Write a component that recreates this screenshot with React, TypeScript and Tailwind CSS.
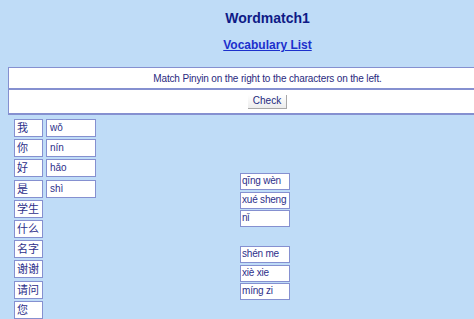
import React from 'react';

const chars = ['我', '你', '好', '是', '学生', '什么', '名字', '谢谢', '请问', '您'];
const matched = ['wǒ', 'nín', 'hǎo', 'shì'];
const pool = [['qīng wèn', 'xué sheng', 'nǐ'], ['shén me', 'xiè xie', 'míng zi']];

export default function App() {
  return (
    <div className="w-[474px] h-[319px] overflow-hidden bg-[#bfdcf7] font-['Liberation_Sans','Noto_Sans_CJK_SC',sans-serif]">
      <div className="w-[535px] px-2 pt-2">
        {/* Heading */}
        <div className="h-[20px] text-center text-[14px] leading-[20px] font-bold text-[#0e1a86]">Wordmatch1</div>
        <div className="mt-[9px] h-[16px] text-center text-[12px] leading-[16px] font-bold">
          <a href="#" className="text-[#1c30cc] underline">Vocabulary List</a>
        </div>

        {/* Instructions + check */}
        <div className="mt-[14px]">
          <div className="h-[22px] border border-[#8590d0] bg-white flex items-center justify-center text-[10px] tracking-[-0.15px] text-[#2a2a7e]">
            Match Pinyin on the right to the characters on the left.
          </div>
          <div className="h-[26px] border border-[#8590d0] border-b-2 bg-white flex items-center justify-center">
            <button className="h-[14px] w-[39px] flex items-center justify-center text-[10px] leading-none text-[#1e2a80] bg-gradient-to-b from-white to-[#ececec] border-r border-b border-[#a8a8a8]">
              Check
            </button>
          </div>
        </div>

        {/* Word match area */}
        <div className="flex px-[6px] pt-[4px]">
          <div className="flex flex-col gap-[2.2px]">
            {chars.map((c, i) => (
              <div key={c} className="flex gap-[3px]">
                <div className="w-[29px] h-[18px] border border-[#8590d0] bg-white pl-[2px] text-[11px] leading-[16px] text-[#2d2f8a]">
                  {c}
                </div>
                {matched[i] && (
                  <div className="w-[50px] h-[18px] border border-[#8590d0] bg-white pl-[3px] text-[10px] leading-[15px] text-[#2d2f8a]">
                    {matched[i]}
                  </div>
                )}
              </div>
            ))}
          </div>

          <div className="ml-[144px] pt-[54px] flex flex-col gap-[19px]">
            {pool.map((group, g) => (
              <div key={g} className="flex flex-col gap-[1.5px]">
                {group.map((p) => (
                  <div
                    key={p}
                    className="w-[50px] h-[17px] border border-[#8590d0] bg-white pl-[1px] text-[10px] leading-[14px] tracking-[-0.2px] text-[#2d2f8a] whitespace-nowrap overflow-hidden"
                  >
                    {p}
                  </div>
                ))}
              </div>
            ))}
          </div>
        </div>
      </div>
    </div>
  );
}
